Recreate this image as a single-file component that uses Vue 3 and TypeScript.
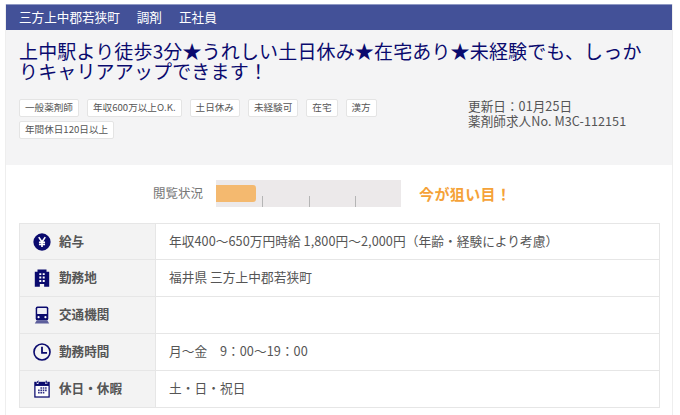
<script setup lang="ts">
interface Row {
  icon: 'yen' | 'building' | 'train' | 'clock' | 'calendar'
  label: string
  value: string
}

const tags: string[] = ['一般薬剤師', '年収600万以上O.K.', '土日休み', '未経験可', '在宅', '漢方', '年間休日120日以上']

const rows: Row[] = [
  { icon: 'yen', label: '給与', value: '年収400～650万円時給 1,800円～2,000円（年齢・経験により考慮）' },
  { icon: 'building', label: '勤務地', value: '福井県 三方上中郡若狭町' },
  { icon: 'train', label: '交通機関', value: '' },
  { icon: 'clock', label: '勤務時間', value: '月～金　9：00～19：00' },
  { icon: 'calendar', label: '休日・休暇', value: '土・日・祝日' }
]
</script>

<template>
  <div class="page">
    <div class="card">
      <div class="bar">
        <span>三方上中郡若狭町</span>
        <span>調剤</span>
        <span>正社員</span>
      </div>
      <div class="head">
        <h1 class="title">上中駅より徒歩3分★うれしい土日休み★在宅あり★未経験でも、しっかりキャリアアップできます！</h1>
        <div class="meta">
          <ul class="tags">
            <li v-for="tag in tags" :key="tag" class="tag">{{ tag }}</li>
          </ul>
          <div class="info">
            <div class="info-line">更新日：01月25日</div>
            <div class="info-line">薬剤師求人No. M3C-112151</div>
          </div>
        </div>
      </div>
      <div class="body">
        <div class="status">
          <span class="status-label">閲覧状況</span>
          <div class="gauge">
            <div class="gauge-fill"></div>
            <div class="gauge-ticks"><i></i><i></i><i></i></div>
          </div>
          <span class="status-text">今が狙い目！</span>
        </div>
        <div class="table">
          <div v-for="row in rows" :key="row.label" class="row">
            <div class="th">
              <svg class="icon" viewBox="0 0 20 20" aria-hidden="true">
                <template v-if="row.icon === 'yen'">
                  <circle cx="10" cy="10" r="9.6" fill="#0a0a6e" />
                  <path d="M6.4 4.6L10 10l3.6-5.4M10 10v5.6M6.6 10.4h6.8M6.6 12.8h6.8" fill="none" stroke="#fff" stroke-width="1.8" />
                </template>
                <template v-else-if="row.icon === 'building'">
                  <path d="M5 0.6h10v2.4h3v16.6h-5.6v-2.8H7.6v2.8H2V3h3z" fill="#0a0a6e" />
                  <path d="M7 4.6h2.2v2.2H7zM10.8 4.6H13v2.2h-2.2zM7 8.4h2.2v2.2H7zM10.8 8.4H13v2.2h-2.2zM7 12.2h2.2v2.2H7zM10.8 12.2H13v2.2h-2.2z" fill="#fff" />
                </template>
                <template v-else-if="row.icon === 'train'">
                  <rect x="3" y="0.6" width="14" height="15.6" rx="2" fill="#0a0a6e" />
                  <rect x="4.6" y="2.2" width="10.8" height="6.8" rx="0.8" fill="#eeeef5" />
                  <circle cx="6.2" cy="12.4" r="1.2" fill="#fff" />
                  <circle cx="13.8" cy="12.4" r="1.2" fill="#fff" />
                  <path d="M4 16h12l2 3.4H2z" fill="#5d5f9c" />
                </template>
                <template v-else-if="row.icon === 'clock'">
                  <circle cx="10" cy="10" r="8.9" fill="none" stroke="#0a0a6e" stroke-width="1.8" />
                  <path d="M10 4.2V11h5.6" fill="none" stroke="#0a0a6e" stroke-width="2" />
                </template>
                <template v-else>
                  <rect x="1.4" y="2" width="17.2" height="17.6" fill="#0a0a6e" />
                  <rect x="2.8" y="6.6" width="14.4" height="11.6" fill="#fff" />
                  <rect x="4.4" y="0.4" width="2" height="3.8" fill="#0a0a6e" stroke="#fff" stroke-width="0.5" />
                  <rect x="13.6" y="0.4" width="2" height="3.8" fill="#0a0a6e" stroke="#fff" stroke-width="0.5" />
                  <path d="M8.2 8h1.8v1.8H8.2zM10.8 8h1.8v1.8h-1.8zM13.4 8h1.8v1.8h-1.8zM5.6 10.6h1.8v1.8H5.6zM8.2 10.6h1.8v1.8H8.2zM10.8 10.6h1.8v1.8h-1.8zM13.4 10.6h1.8v1.8h-1.8zM5.6 13.2h1.8V15H5.6zM8.2 13.2h1.8V15H8.2zM10.8 13.2h1.8V15h-1.8z" fill="#2f2f85" />
                </template>
              </svg>
              <span class="th-label">{{ row.label }}</span>
            </div>
            <div class="td"><span class="td-text">{{ row.value }}</span></div>
          </div>
        </div>
      </div>
    </div>
  </div>
</template>

<style scoped>
.page {
  width: 680px;
  height: 415px;
  overflow: hidden;
  background: #fff;
  padding: 4px 7px 0 5px;
  box-sizing: border-box;
  font-family: 'Noto Sans CJK JP', 'Noto Sans', sans-serif;
  color: #555;
}

.card {
  border-left: 1px solid #eeeeee;
  border-right: 1px solid #eeeeee;
  min-height: 411px;
  box-sizing: border-box;
}

.bar {
  display: flex;
  gap: 17px;
  height: 26px;
  align-items: center;
  padding: 0 0 2px 13px;
  background: #435198;
  border-top: 1px solid #8f99c4;
  box-sizing: border-box;
  color: #fff;
  font-size: 12.6px;
}

.head {
  height: 135px;
  background: #f4f4f5;
  padding: 11px 14px 0 13px;
  box-sizing: border-box;
}

.title {
  margin: 0;
  color: #0a0a6e;
  font-size: 19px;
  font-weight: 400;
  line-height: 20px;
  letter-spacing: 0.15px;
}

.meta {
  display: flex;
  margin-top: 17px;
}

.tags {
  display: flex;
  flex-wrap: wrap;
  align-content: flex-start;
  gap: 4px 8px;
  width: 430px;
  list-style: none;
  margin: 1px 0 0;
  padding: 0;
}

.tag {
  height: 16px;
  line-height: 15px;
  padding: 0 5px;
  background: #fff;
  border: 1px solid #e4e4e4;
  border-radius: 2px;
  font-size: 9.6px;
  color: #555;
}

.info {
  margin-left: 19px;
  font-size: 12.6px;
  color: #555;
}

.info-line {
  height: 15px;
  line-height: 15px;
  letter-spacing: 0.06px;
}

.body {
  padding: 0 12px 0 13px;
}

.status {
  display: flex;
  align-items: center;
  height: 57px;
  margin-bottom: 1px;
  padding-left: 134px;
}

.status-label {
  width: 63px;
  font-size: 12.5px;
  color: #777;
  margin-bottom: 2px;
}

.gauge {
  position: relative;
  width: 185px;
  height: 27px;
  background: #ece9ea;
}

.gauge-fill {
  width: 40px;
  height: 17px;
  margin-top: 5px;
  float: left;
  background: #f4b96f;
  border-radius: 0 3px 3px 0;
}

.gauge-ticks {
  position: absolute;
  left: 46px;
  bottom: 0;
  display: flex;
  gap: 45.5px;
}

.gauge-ticks i {
  display: block;
  width: 1px;
  height: 11px;
  background: #b5b5b5;
}

.status-text {
  margin-left: 18px;
  font-size: 15px;
  font-weight: 700;
  color: #f5a238;
  letter-spacing: 0.4px;
}

.table {
  border: 1px solid #e6e6e6;
}

.row {
  display: flex;
  height: 37px;
  box-sizing: border-box;
  border-bottom: 1px solid #e6e6e6;
}

.row:first-child {
  height: 36px;
}

.row:last-child {
  height: 36px;
  border-bottom: none;
}

.th {
  display: flex;
  align-items: center;
  gap: 8px;
  width: 136px;
  padding-left: 13px;
  box-sizing: border-box;
  background: #f3f3f3;
  border-right: 1px solid #e6e6e6;
  font-size: 12.6px;
  font-weight: 700;
  color: #555;
}

.th-label {
  margin-bottom: 3px;
}

.icon {
  width: 18px;
  height: 18px;
  flex: 0 0 auto;
}

.td {
  display: flex;
  align-items: center;
  padding-left: 13px;
  font-size: 12.7px;
  letter-spacing: 0.05px;
  color: #555;
}

.td-text {
  margin-bottom: 3px;
}
</style>
